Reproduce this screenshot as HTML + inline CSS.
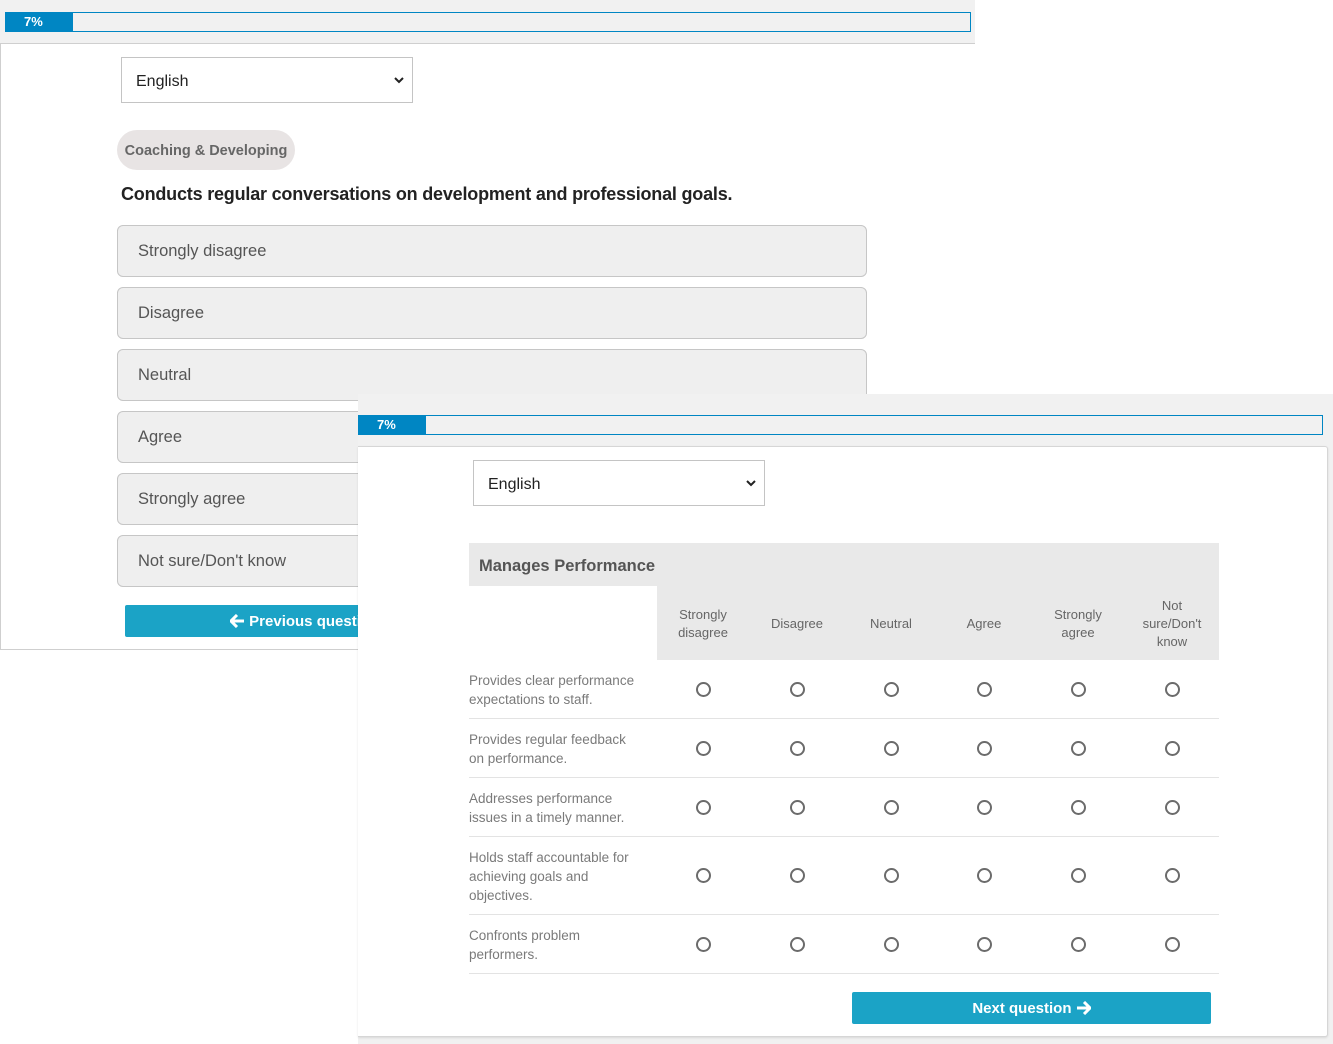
<!DOCTYPE html>
<html><head><meta charset="utf-8"><style>
*{box-sizing:border-box;margin:0;padding:0}
body{width:1333px;height:1044px;position:relative;background:#fff;font-family:"Liberation Sans",sans-serif;overflow:hidden}
.abs{position:absolute}
.bar{border:1px solid #0086c3;background:#f1f1f1}
.bar .fill{position:absolute;left:0;top:0;bottom:0;width:67px;background:#0086c3;color:#fff;font-weight:bold;font-size:13px;line-height:17px;padding-left:18px}
.sel{border:1px solid #c4c4c4;background:#fff;font-size:16px;color:#222;padding-left:14px;line-height:47px}
.sel svg{position:absolute;right:8px;top:18px}
.opt{position:absolute;left:117px;width:750px;height:52px;background:#efefef;border:1px solid #c6c6c6;border-radius:6px;font-size:16.5px;color:#555;line-height:50px;padding-left:20px}
.btn{background:#1ba3c6;color:#fff;font-weight:bold;font-size:15px;text-align:center;border-radius:2px}
.r{position:absolute;width:15px;height:15px;border:2px solid #6b6b6b;border-radius:50%}
.hl{position:absolute;width:94px;text-align:center;font-size:13px;line-height:18px;color:#666}
.rl{position:absolute;left:469px;font-size:13.5px;line-height:19px;color:#7a7a7a;width:200px;white-space:nowrap}
.sep{position:absolute;left:469px;width:750px;height:1px;background:#e3e3e3}
</style></head><body>
<div class="abs" style="left:0;top:0;width:975px;height:44px;background:#f1f1f1"></div>
<div class="abs bar" style="left:5px;top:12px;width:966px;height:20px"><div class="fill">7%</div></div>
<div class="abs" style="left:0;top:43px;width:975px;height:607px;border:1px solid #cfcfcf;border-right:none;background:#fff"></div>
<div class="abs sel" style="left:121px;top:57px;width:292px;height:46px">English<svg width="10" height="8" viewBox="0 0 10 8"><path d="M1 2l4 4 4-4" stroke="#222" stroke-width="2" fill="none"/></svg></div>
<div class="abs" style="left:117px;top:130px;width:178px;height:40px;border-radius:20px;background:#e8e4e4;color:#666;font-size:14.5px;font-weight:bold;line-height:42px;text-align:center">Coaching &amp; Developing</div>
<div class="abs" style="left:121px;top:182px;font-size:18px;font-weight:bold;color:#222;line-height:24px;letter-spacing:-0.2px">Conducts regular conversations on development and professional goals.</div>
<div class="opt" style="top:225px">Strongly disagree</div>
<div class="opt" style="top:287px">Disagree</div>
<div class="opt" style="top:349px">Neutral</div>
<div class="opt" style="top:411px">Agree</div>
<div class="opt" style="top:473px">Strongly agree</div>
<div class="opt" style="top:535px">Not sure/Don't know</div>
<div class="abs btn" style="left:125px;top:605px;width:500px;height:32px;line-height:34px;text-align:left;padding-left:105px"><svg width="15" height="14" viewBox="0 0 15 14" style="vertical-align:-2px"><path d="M7 1L1 7l6 6M1.5 7H14" stroke="#fff" stroke-width="3" fill="none"/></svg> Previous question</div>

<div class="abs" style="left:358px;top:394px;width:975px;height:650px;background:#f1f1f1"></div>
<div class="abs bar" style="left:358px;top:415px;width:965px;height:20px"><div class="fill">7%</div></div>
<div class="abs" style="left:358px;top:446px;width:970px;height:591px;background:#fff;border:1px solid #d6d6d6;border-left:none;border-radius:0 3px 3px 0;box-shadow:0 1px 2px rgba(0,0,0,.1)"></div>
<div class="abs sel" style="left:473px;top:460px;width:292px;height:46px">English<svg width="10" height="8" viewBox="0 0 10 8"><path d="M1 2l4 4 4-4" stroke="#222" stroke-width="2" fill="none"/></svg></div>
<div class="abs" style="left:469px;top:543px;width:750px;height:43px;background:#e9e9e9;color:#555;font-weight:bold;font-size:16.5px;line-height:46px;padding-left:10px">Manages Performance</div>
<div class="abs" style="left:657px;top:585px;width:562px;height:75px;background:#e9e9e9"></div>
<div class="hl" style="left:656px;top:606px">Strongly<br>disagree</div>
<div class="hl" style="left:750px;top:615px">Disagree</div>
<div class="hl" style="left:844px;top:615px">Neutral</div>
<div class="hl" style="left:937px;top:615px">Agree</div>
<div class="hl" style="left:1031px;top:606px">Strongly<br>agree</div>
<div class="hl" style="left:1125px;top:597px">Not<br>sure/Don't<br>know</div>

<div class="rl" style="top:671px">Provides clear performance<br>expectations to staff.</div>
<div class="sep" style="top:718px"></div>
<div class="rl" style="top:730px">Provides regular feedback<br>on performance.</div>
<div class="sep" style="top:777px"></div>
<div class="rl" style="top:789px">Addresses performance<br>issues in a timely manner.</div>
<div class="sep" style="top:836px"></div>
<div class="rl" style="top:848px">Holds staff accountable for<br>achieving goals and<br>objectives.</div>
<div class="sep" style="top:914px"></div>
<div class="rl" style="top:926px">Confronts problem<br>performers.</div>
<div class="sep" style="top:973px"></div>

<div class="abs btn" style="left:852px;top:992px;width:359px;height:32px;line-height:34px">Next question <svg width="15" height="14" viewBox="0 0 15 14" style="vertical-align:-2px"><path d="M8 1l6 6-6 6M13.5 7H1" stroke="#fff" stroke-width="3" fill="none"/></svg></div>

<div class="r" style="left:696px;top:682px"></div><div class="r" style="left:790px;top:682px"></div><div class="r" style="left:884px;top:682px"></div><div class="r" style="left:977px;top:682px"></div><div class="r" style="left:1071px;top:682px"></div><div class="r" style="left:1165px;top:682px"></div>
<div class="r" style="left:696px;top:741px"></div><div class="r" style="left:790px;top:741px"></div><div class="r" style="left:884px;top:741px"></div><div class="r" style="left:977px;top:741px"></div><div class="r" style="left:1071px;top:741px"></div><div class="r" style="left:1165px;top:741px"></div>
<div class="r" style="left:696px;top:800px"></div><div class="r" style="left:790px;top:800px"></div><div class="r" style="left:884px;top:800px"></div><div class="r" style="left:977px;top:800px"></div><div class="r" style="left:1071px;top:800px"></div><div class="r" style="left:1165px;top:800px"></div>
<div class="r" style="left:696px;top:868px"></div><div class="r" style="left:790px;top:868px"></div><div class="r" style="left:884px;top:868px"></div><div class="r" style="left:977px;top:868px"></div><div class="r" style="left:1071px;top:868px"></div><div class="r" style="left:1165px;top:868px"></div>
<div class="r" style="left:696px;top:937px"></div><div class="r" style="left:790px;top:937px"></div><div class="r" style="left:884px;top:937px"></div><div class="r" style="left:977px;top:937px"></div><div class="r" style="left:1071px;top:937px"></div><div class="r" style="left:1165px;top:937px"></div>
</body></html>
